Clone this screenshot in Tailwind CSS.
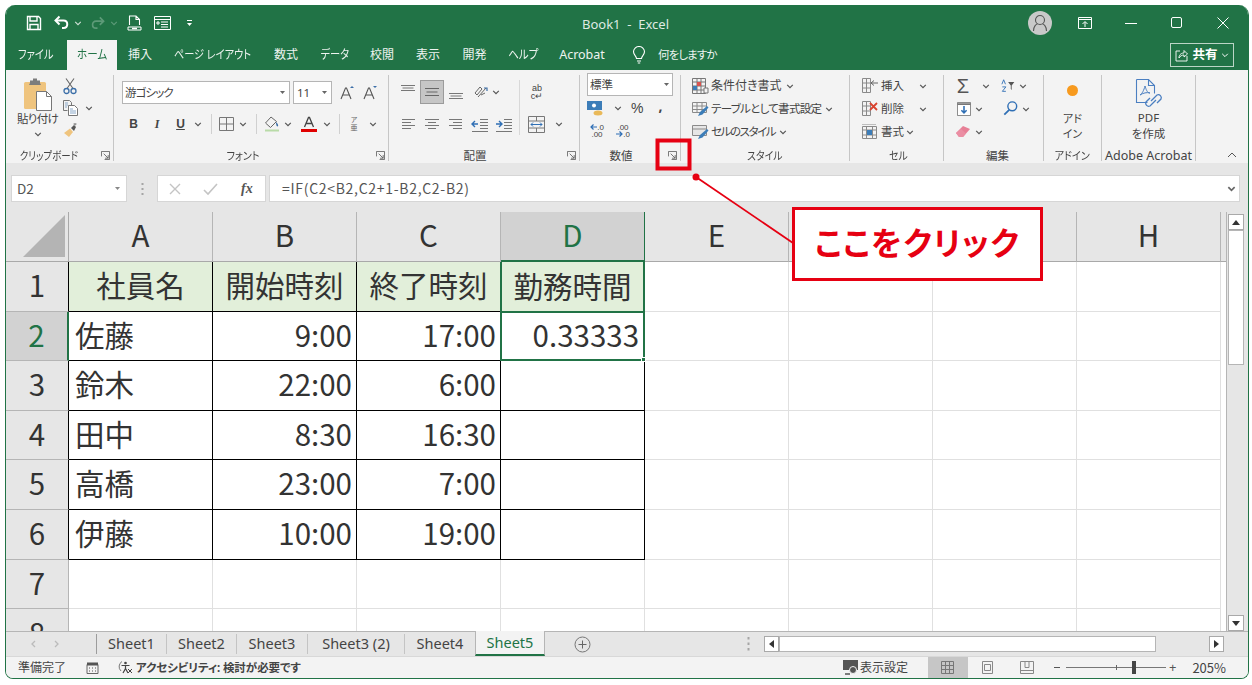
<!DOCTYPE html>
<html lang="ja">
<head>
<meta charset="utf-8">
<script src="https://cdn.jsdelivr.net/npm/@tailwindcss/browser@4"></script>
</head>
<body class="bg-white">
<svg class="hidden">
<symbol id="c" viewBox="0 0 8 8"><path d="M1.200 2.800 4 5.600 6.800 2.800" fill="none" stroke="#555" stroke-width="1.200"/></symbol>
<symbol id="l" viewBox="0 0 10 10"><path d="M.5 6V.5H9.500V9.500H4M3 3 8 8M8 4.500V8H4.500" fill="none" stroke="#666" stroke-width="1"/></symbol>
</svg>
<div class="relative w-[1252px] h-[685px] overflow-hidden p-[5px] font-['Noto_Sans','Noto_Sans_CJK_JP',sans-serif] [font-feature-settings:'palt'] text-[#444]">
  <div class="w-[1244px] h-[674px] border-x border-b border-[#217346] rounded-t-[10px] rounded-b-[8px] overflow-hidden flex flex-col bg-[#f3f3f3]">

    <!-- title bar -->
    <div class="h-[35px] -mx-px bg-[#217346] grid grid-cols-3 items-center text-white shrink-0">
      <div class="flex items-center pl-[21px] h-full pt-[1px]">
        <svg class="w-[16px] h-[16px]" viewBox="0 0 16 16"><path d="M1.500 1.500h11l2 2v11h-13zM4 1.500v4.500h7V1.500M4 14.500V9.500h8v5" fill="none" stroke="#fff" stroke-width="1.400"/></svg>
        <svg class="w-[16px] h-[16px] ml-[12px]" viewBox="0 0 16 16"><path d="M5.500 1.500 1.500 5.500 5.500 9.500" fill="none" stroke="#fff" stroke-width="2"/><path d="M2 5.500h7.500c5 0 5 7.500 0 7.500H8" fill="none" stroke="#fff" stroke-width="2"/></svg>
        <svg class="w-[8px] h-[8px] ml-[4px]" viewBox="0 0 8 8"><path d="M1.200 2.800 4 5.600 6.800 2.800" fill="none" stroke="#cfe0d6" stroke-width="1.100"/></svg>
        <svg class="w-[15px] h-[15px] ml-[8px]" viewBox="0 0 16 16"><path d="M10.500 1.500 14.500 5.500 10.500 9.500" fill="none" stroke="#5d9a78" stroke-width="1.800"/><path d="M14 5.500H6.500c-5 0-5 7.500 0 7.500H8" fill="none" stroke="#5d9a78" stroke-width="1.800"/></svg>
        <svg class="w-[8px] h-[8px] ml-[5px]" viewBox="0 0 8 8"><path d="M1.200 2.800 4 5.600 6.800 2.800" fill="none" stroke="#5d9a78" stroke-width="1.100"/></svg>
        <svg class="w-[15px] h-[16px] ml-[9px]" viewBox="0 0 15 16"><path d="M2.500 10V1h6.500l3.500 3.500V10M9 1v3.500h3.500" fill="none" stroke="#fff" stroke-width="1.100"/><path d="M1 12h13v3H1z" fill="none" stroke="#fff" stroke-width="1"/><path d="M5 13.500h5" stroke="#fff" stroke-width="1.500"/></svg>
        <svg class="w-[17px] h-[14px] ml-[12px]" viewBox="0 0 17 14"><path d="M.500.500h16v13H.500zM.500 3.500h16M7 6h7M7 8.500h7M7 11h7M3 6h2v2H3z" fill="none" stroke="#fff" stroke-width="1"/></svg>
        <svg class="w-[7px] h-[8px] ml-[15px]" viewBox="0 0 7 8"><path d="M1 1.500h5" stroke="#fff"/><path d="M1 4h5L3.500 7z" fill="#fff"/></svg>
      </div>
      <div class="text-center text-[13px] text-[#dfeae3] pt-[4px] pr-[3px]">Book1 &nbsp;-&nbsp; Excel</div>
      <div class="flex items-center justify-end h-full">
        <div class="w-[24px] h-[24px] rounded-full bg-[#c9c9c9] flex items-center justify-center mr-[26px]">
          <svg class="w-[16px] h-[18px]" viewBox="0 0 16 18"><circle cx="8" cy="6" r="4.500" fill="none" stroke="#555" stroke-width="1.100"/><path d="M1.500 17c0-5 3-7 4-7M14.500 17c0-5-3-7-4-7" fill="none" stroke="#555" stroke-width="1.100"/></svg>
        </div>
        <svg class="w-[14px] h-[12px] mr-[33px]" viewBox="0 0 14 12"><path d="M.500.500h13v11H.500zM.500 2.500h13" fill="none" stroke="#fff"/><path d="M7 10V5M4.500 7 7 4.500 9.500 7" fill="none" stroke="#fff"/></svg>
        <svg class="w-[12px] h-[12px] mr-[34px]" viewBox="0 0 12 12"><path d="M0 6.500h12" stroke="#fff"/></svg>
        <svg class="w-[11px] h-[11px] mr-[35px]" viewBox="0 0 11 11"><rect x=".5" y=".5" width="10" height="10" rx="1.500" fill="none" stroke="#fff"/></svg>
        <svg class="w-[12px] h-[12px] mr-[20px]" viewBox="0 0 12 12"><path d="M.500.500l11 11M11.500.500l-11 11" stroke="#fff"/></svg>
      </div>
    </div>

    <!-- ribbon tabs -->
    <div class="h-[30px] -mx-px bg-[#217346] flex items-stretch text-[12px] leading-none text-[#eef4f0] shrink-0">
      <div class="w-[62px] flex items-center justify-center"><span class="scale-x-[.85]">ファイル</span></div>
      <div class="w-[50px] flex items-center justify-center bg-[#f3f3f3] text-[#217346]"><span class="scale-x-[.88]">ホーム</span></div>
      <div class="w-[46px] flex items-center justify-center">挿入</div>
      <div class="w-[99px] flex items-center justify-center whitespace-nowrap"><span class="scale-x-[.85]">ページ レイアウト</span></div>
      <div class="w-[48px] flex items-center justify-center">数式</div>
      <div class="w-[49px] flex items-center justify-center"><span class="scale-x-[.85]">データ</span></div>
      <div class="w-[46px] flex items-center justify-center">校閲</div>
      <div class="w-[46px] flex items-center justify-center">表示</div>
      <div class="w-[47px] flex items-center justify-center">開発</div>
      <div class="w-[50px] flex items-center justify-center"><span class="scale-x-[.88]">ヘルプ</span></div>
      <div class="w-[68px] flex items-center justify-center text-[12.5px]">Acrobat</div>
      <div class="flex items-center ml-[16px]">
        <svg class="w-[14px] h-[18px]" viewBox="0 0 14 18"><path d="M4.500 12.500C4.500 10 1.500 9 1.500 5.800a5.500 5.300 0 0 1 11 0C12.500 9 9.500 10 9.500 12.500zM5 15h4M5.800 17h2.400" fill="none" stroke="#fff" stroke-width="1.100"/></svg>
        <span class="ml-[12px] text-[11.5px] tracking-[-.9px]">何をしますか</span>
      </div>
      <div class="flex-1 flex items-center justify-end pr-[15px]">
        <div class="w-[64px] h-[24px] border border-[#bcd5c6] flex items-center justify-center text-[12.5px] text-white font-bold">
          <svg class="w-[13px] h-[13px] mr-[4px]" viewBox="0 0 13 13"><path d="M5 2H1v10h11V7M4 9c0-4 3-5 5-5V1.500L12.500 5 9 8V6C7 6 5 7 4 9z" fill="none" stroke="#fff" stroke-width=".9"/></svg>共有<svg class="w-[8px] h-[8px] ml-[3px]" viewBox="0 0 8 8"><path d="M1.200 2.800 4 5.600 6.800 2.800" fill="none" stroke="#fff"/></svg>
        </div>
      </div>
    </div>

    <!-- ribbon -->
    <div class="h-[93px] pt-[5px] flex text-[11.5px] leading-none shrink-0">
      <!-- clipboard -->
      <div class="relative w-[108px] h-[86px] border-r border-[#c6c6c6] flex flex-col">
        <div class="flex h-[72px]">
          <div class="w-[55px] pl-[8px] flex flex-col items-center">
            <svg class="w-[30px] h-[33px] mt-[3px]" viewBox="0 0 30 33"><rect x="1" y="4" width="22" height="27" rx="1.500" fill="#efc47e"/><path d="M7 5V2.500h3V.5h4v2h3V5l1 2H6z" fill="#7c7c7c"/><path d="M13.500 13.500h10l5 5v14h-15z" fill="#fff" stroke="#777"/><path d="M23.500 13.500v5h5" fill="none" stroke="#777"/></svg>
            <span class="mt-[2px] text-[11.5px] tracking-[-.7px] whitespace-nowrap">貼り付け</span>
            <svg class="w-[8px] h-[8px] mt-[5px]"><use href="#c"/></svg>
          </div>
          <div class="flex flex-col">
            <div class="h-[22px] w-[18px] flex items-center justify-center"><svg class="w-[14px] h-[18px]" viewBox="0 0 14 18"><path d="M3 1.500l7 10M11 1.500l-7 10" stroke="#666" stroke-width="1.100" fill="none"/><circle cx="3.500" cy="14" r="2.500" fill="none" stroke="#3c6fa8" stroke-width="1.300"/><circle cx="10.500" cy="14" r="2.500" fill="none" stroke="#3c6fa8" stroke-width="1.300"/></svg></div>
            <div class="h-[22px] flex items-center"><div class="w-[18px] flex justify-center"><svg class="w-[15px] h-[16px]" viewBox="0 0 15 16"><path d="M.500.500h6l2 2v3M.500.500v10h4" fill="none" stroke="#777"/><path d="M5.500 5.500h6l3 3v7h-9z" fill="#fff" stroke="#777"/><path d="M7 9h3M7 11h6M7 13h6M2 3h3M2 5h3M2 7h2" stroke="#8aa8c8"/></svg></div><svg class="w-[8px] h-[8px] ml-[6px]"><use href="#c"/></svg></div>
            <div class="h-[22px] w-[18px] flex items-center justify-center"><svg class="w-[15px] h-[15px]" viewBox="0 0 15 15"><path d="M1 10 7 5.500l3 3.500-4 5z" fill="#efc47e"/><path d="M8 5l3-3 2 2-2 4z" fill="#555"/><path d="M12 .5v2M10.500 1h3" stroke="#777"/></svg></div>
          </div>
        </div>
        <div class="mt-auto text-center pr-[25px] pl-[4px] h-[11px] whitespace-nowrap text-[11px]"><span class="inline-block scale-x-[.86]">クリップボード</span></div>
        <svg class="absolute right-[3px] bottom-[1px] w-[9px] h-[9px]"><use href="#l"/></svg>
      </div>
      <!-- font -->
      <div class="relative w-[275px] h-[86px] border-r border-[#c6c6c6] flex flex-col pl-[8px]">
        <div class="flex items-center h-[23px] mt-[6px]">
          <div class="w-[168px] h-[23px] bg-white border border-[#b5b5b5] flex items-center justify-between px-[2px]"><span class="tracking-[-.9px] mt-[1px]">游ゴシック</span><svg class="w-[7px] h-[7px] mr-[1px]" viewBox="0 0 7 7"><path d="M1 2h5L3.500 5z" fill="#666"/></svg></div>
          <div class="w-[39px] h-[23px] ml-[3px] bg-white border border-[#b5b5b5] flex items-center justify-between px-[3px] text-[11.5px]"><span>11</span><svg class="w-[7px] h-[7px]" viewBox="0 0 7 7"><path d="M1 2h5L3.500 5z" fill="#666"/></svg></div>
          <div class="w-[20px] ml-[5px] flex justify-center"><svg class="w-[16px] h-[16px]" viewBox="0 0 16 16"><path d="M2 14 6.500 3h1L12 14M4 10h6" fill="none" stroke="#555" stroke-width="1.100"/><path d="M11 3l2-2 2 2z" fill="#3c6fa8"/></svg></div>
          <div class="w-[20px] ml-[3px] flex justify-center"><svg class="w-[16px] h-[16px]" viewBox="0 0 16 16"><path d="M2 14 6.500 3h1L12 14M4 10h6" fill="none" stroke="#555" stroke-width="1.100"/><path d="M11 1l2 2 2-2z" fill="#3c6fa8"/></svg></div>
        </div>
        <div class="flex items-center h-[22px] mt-[9px]">
          <div class="w-[23px] text-center font-bold text-[12px] font-['Liberation_Sans']">B</div>
          <div class="w-[24px] text-center font-bold italic text-[12px] font-['Liberation_Serif']">I</div>
          <div class="w-[23px] text-center font-bold underline text-[12px] font-['Liberation_Sans']">U</div>
          <div class="w-[12px] flex justify-center"><svg class="w-[8px] h-[8px]"><use href="#c"/></svg></div>
          <div class="w-[14px] flex justify-center"><div class="w-px h-[20px] bg-[#d0d0d0]"></div></div>
          <svg class="w-[15px] h-[14px] ml-[1px]" viewBox="0 0 15 14"><path d="M.500.500h14v13H.500zM7.500.500v13M.500 7h14" fill="none" stroke="#777"/></svg>
          <div class="w-[12px] ml-[3px] flex justify-center"><svg class="w-[8px] h-[8px]"><use href="#c"/></svg></div>
          <div class="w-[14px] flex justify-center"><div class="w-px h-[20px] bg-[#d0d0d0]"></div></div>
          <div class="w-[18px] flex justify-center"><svg class="w-[17px] h-[17px]" viewBox="0 0 17 17"><path d="M7 1 1.500 7l5 4.500 6-6z" fill="none" stroke="#666"/><path d="M12 6c2 2 2.500 3 2 4s-2 .5-2-4z" fill="#3c6fa8"/><path d="M1 14.500h14" stroke="#b9dba8" stroke-width="2"/></svg></div>
          <div class="w-[12px] ml-[1px] flex justify-center"><svg class="w-[8px] h-[8px]"><use href="#c"/></svg></div>
          <div class="w-[20px] ml-[5px] flex justify-center"><svg class="w-[16px] h-[16px]" viewBox="0 0 16 16"><path d="M3.500 11 7.500 1.500h1L12.500 11M5 7.500h6" fill="none" stroke="#444" stroke-width="1.300"/><path d="M0 14.500h16" stroke="#e00000" stroke-width="3"/></svg></div>
          <div class="w-[12px] ml-[2px] flex justify-center"><svg class="w-[8px] h-[8px]"><use href="#c"/></svg></div>
          <div class="w-[12px] flex justify-center"><div class="w-px h-[20px] bg-[#d0d0d0]"></div></div>
          <div class="w-[18px] text-center text-[7px] leading-[8.5px] text-[#666]">ア<br>亜</div>
          <div class="w-[12px] ml-[4px] flex justify-center"><svg class="w-[8px] h-[8px]"><use href="#c"/></svg></div>
        </div>
        <div class="mt-auto text-center pr-[24px] h-[11px] text-[11px]"><span class="inline-block scale-x-[.92]">フォント</span></div>
        <svg class="absolute right-[3px] bottom-[1px] w-[9px] h-[9px]"><use href="#l"/></svg>
      </div>
      <!-- alignment -->
      <div class="relative w-[191px] h-[86px] border-r border-[#c6c6c6] flex flex-col">
        <div class="flex h-[55px] mt-[5px]">
          <div class="w-[131px] pl-[7px] border-r border-[#d8d8d8] flex flex-col">
            <div class="flex items-center h-[24px]">
              <svg class="w-[24px] h-[18px]" viewBox="0 0 24 18"><path d="M5 2.500h14M6.500 5h11M5 7.500h14" fill="none" stroke="#777"/></svg>
              <div class="w-[24px] h-[24px] bg-[#c6c6c6] border border-[#9b9b9b] flex items-center justify-center"><svg class="w-[16px] h-[10px]" viewBox="0 0 16 10"><path d="M1 1.500h14M2.500 5h11M1 8.500h14" fill="none" stroke="#666"/></svg></div>
              <svg class="w-[24px] h-[18px]" viewBox="0 0 24 18"><path d="M5 10.500h14M6.500 13h11M5 15.500h14" fill="none" stroke="#777"/></svg>
              <svg class="w-[18px] h-[18px] ml-[4px]" viewBox="0 0 18 18"><path d="M3 10l5-6 2 2-5 6zM9 12l4-2M6 14l8-9" fill="none" stroke="#666"/><path d="M12 5h3v3" fill="none" stroke="#3c6fa8" stroke-width="1.200"/></svg>
              <svg class="w-[8px] h-[8px] ml-[2px]"><use href="#c"/></svg>
            </div>
            <div class="flex items-center h-[22px] mt-[9px]">
              <svg class="w-[24px] h-[14px]" viewBox="0 0 24 14"><path d="M6 2.500h13M6 5.500h9M6 8.500h13M6 11.500h9" fill="none" stroke="#777"/></svg>
              <svg class="w-[24px] h-[14px]" viewBox="0 0 24 14"><path d="M5 2.500h14M8 5.500h8M5 8.500h14M8 11.500h8" fill="none" stroke="#777"/></svg>
              <svg class="w-[24px] h-[14px]" viewBox="0 0 24 14"><path d="M5 2.500h13M9 5.500h9M5 8.500h13M9 11.500h9" fill="none" stroke="#777"/></svg>
              <svg class="w-[24px] h-[15px]" viewBox="0 0 24 15"><path d="M12 2.500h8M12 5.500h8M12 8.500h8M12 11.500h8M4 14.500h16" fill="none" stroke="#777"/><path d="M10 7H4M7 4 4 7l3 3" fill="none" stroke="#2f6fb5" stroke-width="1.400"/></svg>
              <svg class="w-[24px] h-[15px]" viewBox="0 0 24 15"><path d="M12 2.500h8M12 5.500h8M12 8.500h8M12 11.500h8M4 14.500h16" fill="none" stroke="#777"/><path d="M4 7h6M7 4l3 3-3 3" fill="none" stroke="#2f6fb5" stroke-width="1.400"/></svg>
            </div>
          </div>
          <div class="flex flex-col pl-[8px]">
            <div class="h-[24px] flex items-center justify-center w-[18px] text-[9px] leading-[8px] font-['Liberation_Sans'] text-center text-[#444]">ab<br>c↵</div>
            <div class="flex items-center h-[22px] mt-[9px]">
              <svg class="w-[17px] h-[17px]" viewBox="0 0 17 17"><path d="M.500.500h16v16H.500zM.500 5h16M.500 12h16M8.500 1v4M8.500 12v4" fill="none" stroke="#777"/><path d="M3 8.500h11M5 6.500l-2 2 2 2M12 6.500l2 2-2 2" fill="none" stroke="#2f6fb5"/></svg>
              <svg class="w-[8px] h-[8px] ml-[10px]"><use href="#c"/></svg>
            </div>
          </div>
        </div>
        <div class="mt-auto text-center pr-[18px] h-[11px] text-[11.5px]">配置</div>
        <svg class="absolute right-[3px] bottom-[1px] w-[9px] h-[9px]"><use href="#l"/></svg>
      </div>
      <!-- number -->
      <div class="relative w-[101px] h-[86px] border-r border-[#c6c6c6] flex flex-col pl-[7px]">
        <div class="w-[86px] h-[23px] -mt-[2px] bg-white border border-[#b5b5b5] flex items-center justify-between px-[2px]"><span>標準</span><svg class="w-[7px] h-[7px]" viewBox="0 0 7 7"><path d="M1 2h5L3.500 5z" fill="#666"/></svg></div>
        <div class="flex items-center h-[22px] mt-[1px]">
          <svg class="w-[17px] h-[16px]" viewBox="0 0 17 16"><rect x="0" y="1" width="15" height="9" fill="#3c7db8"/><circle cx="7" cy="5.500" r="2" fill="#fff"/><ellipse cx="11" cy="13" rx="4.500" ry="2.500" fill="#e9b959"/></svg>
          <svg class="w-[8px] h-[8px] ml-[10px]"><use href="#c"/></svg>
          <span class="ml-[9px] text-[14px] leading-none font-['Liberation_Sans']">%</span>
          <span class="ml-[15px] font-bold text-[14px] leading-none -mt-[5px]">,</span>
        </div>
        <div class="flex items-center h-[22px] mt-[1px] text-[8px] leading-[7px] font-['Liberation_Sans'] text-center">
          <div class="w-[20px]"><svg class="inline-block w-[7px] h-[6px] align-baseline" viewBox="0 0 7 6"><path d="M7 3H1M3.500 .5 1 3l2.500 2.500" fill="none" stroke="#2f6fb5" stroke-width="1.200"/></svg>.0<br>.00</div>
          <div class="w-[20px] ml-[6px]">.00<br><svg class="inline-block w-[7px] h-[6px] align-baseline" viewBox="0 0 7 6"><path d="M0 3h6M3.500 .5 6 3 3.500 5.500" fill="none" stroke="#2f6fb5" stroke-width="1.200"/></svg>.0</div>
        </div>
        <div class="mt-auto text-center pr-[25px] h-[11px] text-[11.5px]">数値</div>
        <svg class="absolute right-[3px] bottom-[1px] w-[9px] h-[9px]"><use href="#l"/></svg>
      </div>
      <!-- styles -->
      <div class="w-[169px] h-[86px] border-r border-[#c6c6c6] flex flex-col pl-[11px] whitespace-nowrap text-[11.5px]">
        <div class="flex items-center h-[23px] -mt-[1px]">
          <svg class="w-[17px] h-[16px] mr-[2px]" viewBox="0 0 17 16"><path d="M.500.500h13v15H.500zM.500 4h13M.500 8h13M.500 12h13M5 .5v15M9 .5v15" fill="none" stroke="#777"/><path d="M5 4h4v4H5z" fill="#d9534f"/><path d="M1 8h4v4H1z" fill="#3c7db8"/><path d="M12 10h4v5h-4z" fill="#f3f3f3" stroke="#777"/></svg><span class="text-[12px]">条件付き書式</span><svg class="w-[8px] h-[8px] ml-[4px]"><use href="#c"/></svg>
        </div>
        <div class="flex items-center h-[23px]">
          <svg class="w-[17px] h-[16px] mr-[2px]" viewBox="0 0 17 16"><path d="M.500 1.500h14v10H.500zM.500 5h14M.500 8.500h14M5 1.500v10M10 1.500v10" fill="none" stroke="#8a8a8a"/><path d="M6 15l2-4 7-6 1.500 1.500-6 7z" fill="#3c7db8"/></svg><span class="tracking-[-.7px]">テーブルとして書式設定</span><svg class="w-[8px] h-[8px] ml-[4px]"><use href="#c"/></svg>
        </div>
        <div class="flex items-center h-[23px]">
          <svg class="w-[17px] h-[16px] mr-[2px]" viewBox="0 0 17 16"><path d="M.500 1.500h14v10H.500zM.500 5h14" fill="#e6e6e6" stroke="#8a8a8a"/><path d="M6 15l2-4 7-6 1.500 1.500-6 7z" fill="#3c7db8"/></svg><span class="tracking-[-1.400px]">セルのスタイル</span><svg class="w-[8px] h-[8px] ml-[4px]"><use href="#c"/></svg>
        </div>
        <div class="mt-auto text-center pr-[11px] h-[11px] text-[11px]"><span class="inline-block scale-x-[.9]">スタイル</span></div>
      </div>
      <!-- cells -->
      <div class="w-[94px] h-[86px] border-r border-[#c6c6c6] flex flex-col pl-[11px] whitespace-nowrap">
        <div class="flex items-center h-[23px] -mt-[1px]"><svg class="w-[18px] h-[15px] mr-[2px]" viewBox="0 0 18 15"><path d="M1.500.5h8v14h-8zM1.500 5h8M1.500 10h8M5.500.5v14" fill="none" stroke="#8a8a8a"/><path d="M17 5H10M13 2.500 10 5l3 2.500" fill="none" stroke="#666"/></svg>挿入<svg class="w-[8px] h-[8px] ml-[15px]"><use href="#c"/></svg></div>
        <div class="flex items-center h-[23px]"><svg class="w-[18px] h-[15px] mr-[2px]" viewBox="0 0 18 15"><path d="M1.500.5h8v14h-8zM1.500 5h8M1.500 10h8M5.500.5v14" fill="none" stroke="#8a8a8a"/><path d="M9 2l7 7M16 2 9 9" stroke="#d9432f" stroke-width="1.800"/></svg>削除<svg class="w-[8px] h-[8px] ml-[15px]"><use href="#c"/></svg></div>
        <div class="flex items-center h-[23px]"><svg class="w-[18px] h-[16px] mr-[2px]" viewBox="0 0 18 16"><path d="M1.500 2.500h14v12h-14zM1.500 6h14M1.500 11h14M5.500 2.500v12M11.500 2.500v12" fill="none" stroke="#8a8a8a"/><path d="M6 6h5v5H6z" fill="#3c7db8"/><path d="M1.500.5h14" stroke="#888" stroke-dasharray="1 1"/></svg>書式<svg class="w-[8px] h-[8px] ml-[2px]"><use href="#c"/></svg></div>
        <div class="mt-auto text-center pr-[7px] h-[11px] text-[11px]"><span class="inline-block scale-x-[.9]">セル</span></div>
      </div>
      <!-- edit -->
      <div class="w-[100px] h-[86px] border-r border-[#c6c6c6] flex flex-col pl-[10px]">
        <div class="flex items-center h-[23px] -mt-[1px]">
          <span class="w-[18px] text-center text-[20px] leading-none text-[#555] font-['Liberation_Sans']">Σ</span>
          <svg class="w-[8px] h-[8px] ml-[10px]"><use href="#c"/></svg>
          <svg class="w-[16px] h-[14px] ml-[11px]" viewBox="0 0 18 15"><path d="M1 5.500 3 .5l2 5M1.500 8.500h4l-4 5h4" fill="none" stroke="#2f6fb5"/><path d="M8 3h7l-3 4v5l-1-1V7z" fill="#555"/></svg>
          <svg class="w-[8px] h-[8px] ml-[2px]"><use href="#c"/></svg>
        </div>
        <div class="flex items-center h-[23px]">
          <svg class="w-[14px] h-[14px] ml-[3px]" viewBox="0 0 16 16"><path d="M.500.500h15v15H.500z" fill="#fff" stroke="#777"/><path d="M.500 2.500h15" stroke="#777" stroke-width="2"/><path d="M8 4.500v8M5 9.500l3 3 3-3" fill="none" stroke="#2f6fb5" stroke-width="1.800"/></svg>
          <svg class="w-[8px] h-[8px] ml-[4px]"><use href="#c"/></svg>
          <svg class="w-[15px] h-[15px] ml-[20px]" viewBox="0 0 17 17"><circle cx="10.500" cy="6" r="5" fill="none" stroke="#2f6fb5" stroke-width="1.600"/><path d="M7 10 1.500 15.500" stroke="#2f6fb5" stroke-width="2"/></svg>
          <svg class="w-[8px] h-[8px] ml-[4px]"><use href="#c"/></svg>
        </div>
        <div class="flex items-center h-[23px]">
          <svg class="w-[16px] h-[14px] ml-[1px]" viewBox="0 0 16 14"><path d="M1 8 8 1l7 3-7 8H4z" fill="#e77f96"/><path d="M1 8l3 4h4l3-3.500L6 4z" fill="#eb8ea3"/></svg>
          <svg class="w-[8px] h-[8px] ml-[4px]"><use href="#c"/></svg>
        </div>
        <div class="mt-auto text-center pr-[2px] h-[11px] text-[11.5px]">編集</div>
      </div>
      <!-- add-in -->
      <div class="w-[58px] h-[86px] border-r border-[#c6c6c6] flex flex-col items-center">
        <div class="w-[11px] h-[11px] rounded-full bg-[#f79a1e] mt-[10px] blur-[.4px]"></div>
        <div class="mt-[15px] text-[11px] leading-[15px] text-center">アド<br>イン</div>
        <div class="mt-auto h-[11px] text-[11px]"><span class="inline-block scale-x-[.92]">アドイン</span></div>
      </div>
      <!-- acrobat -->
      <div class="w-[94px] h-[86px] border-r border-[#c6c6c6] flex flex-col items-center">
        <svg class="w-[28px] h-[31px] mt-[3px]" viewBox="0 0 28 31"><path d="M1.500 1.500h12l6 6v8M1.500 1.500v23h11M13.500 1.500v6h6" fill="none" stroke="#4b7fc1" stroke-width="1.100"/><path d="M10 8c-1 4-3 8-5 9 3-2 7-3 10-2-3 0-4-4-5-7z" fill="none" stroke="#4b7fc1"/><path d="M16 23l6-6a3 3 0 0 1 4 4l-4 4M21 22l-6 6a3 3 0 0 1-4-4l4-4" fill="none" stroke="#4b7fc1" stroke-width="1.300"/></svg>
        <div class="mt-[1px] text-[11.5px] leading-[16px] text-center">PDF<br>を作成</div>
        <div class="mt-auto h-[11px] text-[12.5px] whitespace-nowrap">Adobe Acrobat</div>
      </div>
      <div class="flex-1 flex justify-end items-end pr-[11px] h-[86px]">
        <svg class="w-[10px] h-[8px] mb-[2px]" viewBox="0 0 10 8"><path d="M1 6l4-4 4 4" fill="none" stroke="#555"/></svg>
      </div>
    </div>

    <!-- formula bar -->
    <div class="h-[49px] bg-[#e6e6e6] pt-[12px] pl-[5px] flex text-[#555] shrink-0">
      <div class="w-[116px] h-[27px] bg-white border border-[#d6d6d6] flex items-center justify-between pl-[5px] pr-[5px] text-[13.5px] font-['Noto_Sans_CJK_JP']"><span>D2</span><svg class="w-[7px] h-[7px]" viewBox="0 0 7 7"><path d="M1 2h5L3.500 5z" fill="#888"/></svg></div>
      <div class="w-[30px] h-[27px] flex items-center justify-center"><svg class="w-[3px] h-[12px]" viewBox="0 0 3 12"><path d="M1.500 0v2M1.500 5v2M1.500 10v2" stroke="#a5a5a5" stroke-width="2"/></svg></div>
      <div class="w-[109px] h-[27px] bg-white border border-[#d6d6d6] flex items-center pl-[10px]">
        <svg class="w-[14px] h-[14px]" viewBox="0 0 14 14"><path d="M2 2l10 10M12 2 2 12" stroke="#c4c4c4" stroke-width="1.400"/></svg>
        <svg class="w-[15px] h-[14px] ml-[21px]" viewBox="0 0 15 14"><path d="M1 8l4 4 9-10" fill="none" stroke="#c4c4c4" stroke-width="1.600"/></svg>
        <span class="ml-[23px] font-['Liberation_Serif'] italic font-bold text-[14px] text-[#555]">fx</span>
      </div>
      <div class="w-[971px] h-[27px] ml-[3px] bg-white border border-[#d6d6d6] flex items-center justify-between pl-[12px] pr-[3px] text-[14px] font-['Noto_Sans_CJK_JP']"><span class="tracking-[.7px]">=IF(C2&lt;B2,C2+1-B2,C2-B2)</span><svg class="w-[9px] h-[9px]" viewBox="0 0 8 8"><path d="M1.200 2.800 4 5.600 6.800 2.800" fill="none" stroke="#666" stroke-width="1.500"/></svg></div>
    </div>

    <!-- sheet + scrollbar -->
    <div class="h-[419px] flex shrink-0 overflow-hidden">
      <div class="w-[1220px] h-[419px] overflow-hidden bg-white grid grid-cols-[63px_repeat(8,144px)_5px] grid-rows-[50px_repeat(8,49.6px)] text-[29.500px] leading-none text-[#333] font-['Noto_Sans_CJK_JP'] [font-feature-settings:normal] [&>div]:pb-[3px]">
        <div class="bg-[#e6e6e6] border-r border-b border-[#a9a9a9] flex items-end justify-end pr-[2px]"><svg class="w-[44px] h-[44px]" viewBox="0 0 44 44"><path d="M43 1V43H1z" fill="#b4b4b4"/></svg></div>
        <div class="bg-[#e6e6e6] border-r border-b border-[#b5b5b5] border-b-[#a9a9a9] flex items-center justify-center">A</div>
        <div class="bg-[#e6e6e6] border-r border-b border-[#b5b5b5] border-b-[#a9a9a9] flex items-center justify-center">B</div>
        <div class="bg-[#e6e6e6] border-r border-b border-[#b5b5b5] border-b-[#a9a9a9] flex items-center justify-center">C</div>
        <div class="bg-[#d2d2d2] border-r border-b-2 border-[#217346] flex items-center justify-center text-[#217346]">D</div>
        <div class="bg-[#e6e6e6] border-r border-b border-[#b5b5b5] border-b-[#a9a9a9] flex items-center justify-center">E</div>
        <div class="bg-[#e6e6e6] border-r border-b border-[#b5b5b5] border-b-[#a9a9a9]"></div>
        <div class="bg-[#e6e6e6] border-r border-b border-[#b5b5b5] border-b-[#a9a9a9]"></div>
        <div class="bg-[#e6e6e6] border-r border-b border-[#b5b5b5] border-b-[#a9a9a9] flex items-center justify-center">H</div>
        <div class="bg-[#e6e6e6] border-b border-[#a9a9a9]"></div>

        <div class="bg-[#e6e6e6] border-r border-b border-[#b5b5b5] border-r-black flex items-center justify-center">1</div>
        <div class="bg-[#e2efda] border-r border-b border-black flex items-center justify-center">社員名</div>
        <div class="bg-[#e2efda] border-r border-b border-black flex items-center justify-center">開始時刻</div>
        <div class="bg-[#e2efda] border-r border-b border-black flex items-center justify-center">終了時刻</div>
        <div class="bg-[#e2efda] border-x-2 border-r-[#217346] border-l-[#217346] flex items-center justify-center -ml-px">勤務時間</div>
        <i class="border-r border-b border-[#e0e0e0]"></i><i class="border-r border-b border-[#e0e0e0]"></i><i class="border-r border-b border-[#e0e0e0]"></i><i class="border-r border-b border-[#e0e0e0]"></i><i></i>

        <div class="bg-[#d2d2d2] border-r-2 border-b border-r-[#217346] border-b-[#b5b5b5] flex items-center justify-center text-[#217346]">2</div>
        <div class="border-r border-b border-black flex items-center pl-[6px]">佐藤</div>
        <div class="border-r border-b border-black flex items-center justify-end pr-[4px]">9:00</div>
        <div class="border-r border-b border-black flex items-center justify-end pr-[4px]">17:00</div>
        <div class="relative border-2 border-[#217346] -ml-px -mt-px flex items-center justify-end pr-[4px]">0.33333<span class="absolute -right-[3px] -bottom-[3px] w-[5px] h-[5px] bg-[#217346] border border-white"></span></div>
        <i class="border-r border-b border-[#e0e0e0]"></i><i class="border-r border-b border-[#e0e0e0]"></i><i class="border-r border-b border-[#e0e0e0]"></i><i class="border-r border-b border-[#e0e0e0]"></i><i></i>

        <div class="bg-[#e6e6e6] border-r border-b border-[#b5b5b5] border-r-black flex items-center justify-center">3</div>
        <div class="border-r border-b border-black flex items-center pl-[6px]">鈴木</div>
        <div class="border-r border-b border-black flex items-center justify-end pr-[4px]">22:00</div>
        <div class="border-r border-b border-black flex items-center justify-end pr-[4px]">6:00</div>
        <div class="border-r border-b border-black"></div>
        <i class="border-r border-b border-[#e0e0e0]"></i><i class="border-r border-b border-[#e0e0e0]"></i><i class="border-r border-b border-[#e0e0e0]"></i><i class="border-r border-b border-[#e0e0e0]"></i><i></i>

        <div class="bg-[#e6e6e6] border-r border-b border-[#b5b5b5] border-r-black flex items-center justify-center">4</div>
        <div class="border-r border-b border-black flex items-center pl-[6px]">田中</div>
        <div class="border-r border-b border-black flex items-center justify-end pr-[4px]">8:30</div>
        <div class="border-r border-b border-black flex items-center justify-end pr-[4px]">16:30</div>
        <div class="border-r border-b border-black"></div>
        <i class="border-r border-b border-[#e0e0e0]"></i><i class="border-r border-b border-[#e0e0e0]"></i><i class="border-r border-b border-[#e0e0e0]"></i><i class="border-r border-b border-[#e0e0e0]"></i><i></i>

        <div class="bg-[#e6e6e6] border-r border-b border-[#b5b5b5] border-r-black flex items-center justify-center">5</div>
        <div class="border-r border-b border-black flex items-center pl-[6px]">高橋</div>
        <div class="border-r border-b border-black flex items-center justify-end pr-[4px]">23:00</div>
        <div class="border-r border-b border-black flex items-center justify-end pr-[4px]">7:00</div>
        <div class="border-r border-b border-black"></div>
        <i class="border-r border-b border-[#e0e0e0]"></i><i class="border-r border-b border-[#e0e0e0]"></i><i class="border-r border-b border-[#e0e0e0]"></i><i class="border-r border-b border-[#e0e0e0]"></i><i></i>

        <div class="bg-[#e6e6e6] border-r border-b border-[#b5b5b5] border-r-black flex items-center justify-center">6</div>
        <div class="border-r border-b border-black flex items-center pl-[6px]">伊藤</div>
        <div class="border-r border-b border-black flex items-center justify-end pr-[4px]">10:00</div>
        <div class="border-r border-b border-black flex items-center justify-end pr-[4px]">19:00</div>
        <div class="border-r border-b border-black"></div>
        <i class="border-r border-b border-[#e0e0e0]"></i><i class="border-r border-b border-[#e0e0e0]"></i><i class="border-r border-b border-[#e0e0e0]"></i><i class="border-r border-b border-[#e0e0e0]"></i><i></i>

        <div class="bg-[#e6e6e6] border-r border-b border-[#b5b5b5] flex items-center justify-center">7</div>
        <i class="border-r border-b border-[#e0e0e0]"></i><i class="border-r border-b border-[#e0e0e0]"></i><i class="border-r border-b border-[#e0e0e0]"></i><i class="border-r border-b border-[#e0e0e0]"></i><i class="border-r border-b border-[#e0e0e0]"></i><i class="border-r border-b border-[#e0e0e0]"></i><i class="border-r border-b border-[#e0e0e0]"></i><i class="border-r border-b border-[#e0e0e0]"></i><i></i>

        <div class="bg-[#e6e6e6] border-r border-[#b5b5b5] flex items-start justify-center pt-[9px]">8</div>
        <i class="border-r border-[#e0e0e0]"></i><i class="border-r border-[#e0e0e0]"></i><i class="border-r border-[#e0e0e0]"></i><i class="border-r border-[#e0e0e0]"></i><i class="border-r border-[#e0e0e0]"></i><i class="border-r border-[#e0e0e0]"></i><i class="border-r border-[#e0e0e0]"></i><i class="border-r border-[#e0e0e0]"></i><i></i>
      </div>
      <div class="flex-1 bg-[#e6e6e6] border-l border-[#b5b5b5] pl-[1px] pt-[2px] flex flex-col">
        <div class="w-[16px] h-[16px] bg-white border border-[#a9a9a9] flex items-center justify-center"><svg class="w-[8px] h-[5px]" viewBox="0 0 8 5"><path d="M0 5 4 0l4 5z" fill="#333"/></svg></div>
        <div class="w-[16px] h-[135px] bg-white border border-[#b5b5b5]"></div>
        <div class="flex-1"></div>
        <div class="w-[16px] h-[16px] bg-white border border-[#a9a9a9] flex items-center justify-center"><svg class="w-[8px] h-[5px]" viewBox="0 0 8 5"><path d="M0 0 4 5l4-5z" fill="#333"/></svg></div>
      </div>
    </div>

    <!-- sheet tabs -->
    <div class="h-[25px] bg-[#e6e6e6] border-t border-[#b5b5b5] flex items-stretch text-[14.500px] text-[#444] shrink-0 font-['Noto_Sans',sans-serif]">
      <div class="w-[90px] flex items-center pl-[24px]">
        <svg class="w-[6px] h-[8px]" viewBox="0 0 6 8"><path d="M5 1 2 4l3 3" fill="none" stroke="#bbb" stroke-width="1.300"/></svg>
        <svg class="w-[6px] h-[8px] ml-[18px]" viewBox="0 0 6 8"><path d="M1 1l3 3-3 3" fill="none" stroke="#bbb" stroke-width="1.300"/></svg>
      </div>
      <div class="w-[70px] my-[2px] border-l border-[#9c9c9c] flex items-center justify-center">Sheet1</div>
      <div class="w-[70px] my-[2px] border-l border-[#c4c4c4] flex items-center justify-center">Sheet2</div>
      <div class="w-[71px] my-[2px] border-l border-[#c4c4c4] flex items-center justify-center">Sheet3</div>
      <div class="w-[97px] my-[2px] border-l border-[#c4c4c4] flex items-center justify-center">Sheet3 (2)</div>
      <div class="w-[71px] my-[2px] border-l border-[#c4c4c4] flex items-center justify-center">Sheet4</div>
      <div class="w-[70px] -mt-px bg-[#f3f3f3] border-x border-[#b5b5b5] border-b-2 border-b-[#217346] flex items-center justify-center text-[#217346]">Sheet5</div>
      <div class="ml-[29px] flex items-center"><svg class="w-[17px] h-[17px]" viewBox="0 0 17 17"><circle cx="8.500" cy="8.500" r="7.500" fill="none" stroke="#777"/><path d="M8.500 4.500v8M4.500 8.500h8" stroke="#666"/></svg></div>
      <div class="ml-[156px] flex items-center"><svg class="w-[3px] h-[14px]" viewBox="0 0 3 14"><path d="M1.500 0v2.500M1.500 5.500v2.500M1.500 11v2.500" stroke="#a5a5a5" stroke-width="2"/></svg></div>
      <div class="ml-[14px] flex items-center">
        <div class="w-[15px] h-[16px] bg-white border border-[#a9a9a9] flex items-center justify-center"><svg class="w-[5px] h-[8px]" viewBox="0 0 5 8"><path d="M5 0 0 4l5 4z" fill="#333"/></svg></div>
        <div class="w-[377px] h-[16px] bg-white border border-[#b5b5b5]"></div>
        <div class="w-[53px]"></div>
        <div class="w-[15px] h-[16px] bg-white border border-[#a9a9a9] flex items-center justify-center"><svg class="w-[5px] h-[8px]" viewBox="0 0 5 8"><path d="M0 0l5 4-5 4z" fill="#333"/></svg></div>
      </div>
    </div>

    <!-- status bar -->
    <div class="h-[22px] bg-[#f3f3f3] border-t border-[#d8d8d8] flex items-center text-[12px] text-[#444] shrink-0">
      <span class="ml-[12px]">準備完了</span>
      <svg class="w-[13px] h-[13px] ml-[20px]" viewBox="0 0 13 13"><path d="M1 3.500h11v9H1z" fill="none" stroke="#666"/><path d="M1 1.500h11v3H1z" fill="#555"/><path d="M3 7h1M6 7h1M9 7h1M3 10h1M6 10h1M9 10h1" stroke="#555"/></svg>
      <svg class="w-[16px] h-[15px] ml-[18px]" viewBox="0 0 16 15"><path d="M5 1.500A6 6 0 0 0 4 11" fill="none" stroke="#777"/><circle cx="8.500" cy="3" r="1.300" fill="#444"/><path d="M4.500 5.500h8M8.500 5.500v3L6 13M8.500 8.500 11 13" fill="none" stroke="#444" stroke-width="1.200"/><path d="M11 9l4 4M15 9l-4 4" stroke="#444"/></svg>
      <span class="ml-[3px] font-bold text-[11.5px] tracking-[-.1px]">アクセシビリティ: 検討が必要です</span>
      <div class="ml-auto flex items-center h-full">
        <svg class="w-[16px] h-[15px]" viewBox="0 0 16 15"><path d="M0 0h15v10H0z" fill="#555"/><circle cx="10" cy="10" r="3.500" fill="#555" stroke="#f3f3f3"/><path d="M2 14h5" stroke="#555" stroke-width="1.500"/></svg>
        <span class="ml-px w-[48px] whitespace-nowrap text-[12px]">表示設定</span>
        <div class="ml-[20px] w-[40px] h-full bg-[#c6c6c6] flex items-center justify-center"><svg class="w-[13px] h-[13px]" viewBox="0 0 13 13"><path d="M.500.500h12v12H.500zM4.500.5v12M8.500.5v12M.5 4.500h12M.5 8.500h12" fill="none" stroke="#777"/></svg></div>
        <div class="w-[40px] flex justify-center"><svg class="w-[13px] h-[13px]" viewBox="0 0 13 13"><path d="M1.500.500h10v12h-10zM3.500 3.500h6v6h-6z" fill="none" stroke="#888"/></svg></div>
        <div class="w-[38px] flex justify-center"><svg class="w-[14px] h-[13px]" viewBox="0 0 14 13"><path d="M.500.500h13v12H.500zM.5 9.500h13M5 .5v6h4v-6" fill="none" stroke="#888"/></svg></div>
        <span class="ml-[8px] w-[6px] h-px bg-[#555]"></span>
        <div class="relative w-[100px] ml-[6px] h-px bg-[#777]"><span class="absolute left-[50px] -top-[2px] w-px h-[5px] bg-[#666]"></span><span class="absolute left-[66px] -top-[6px] w-[4px] h-[13px] bg-[#444]"></span></div>
        <span class="ml-[3px] text-[13px] text-[#555]">+</span>
        <span class="ml-[16px] mr-[22px] text-[13px] font-['Noto_Sans_CJK_JP']">205%</span>
      </div>
    </div>
  </div>

  <!-- annotation overlay -->
  <svg class="absolute left-0 top-0 w-[1252px] h-[685px] pointer-events-none" viewBox="0 0 1252 685">
    <circle cx="696" cy="177" r="3.500" fill="#e60012"/>
    <path d="M696 177 793 243" stroke="#e60012" stroke-width="1.800"/>
    <rect x="657.500" y="140.500" width="32" height="28" fill="none" stroke="#e60012" stroke-width="4"/>
  </svg>
  <div class="absolute left-[792px] top-[207px] w-[251px] h-[74px] pb-[6px] bg-white border-[3px] border-[#e60012] flex items-center justify-center text-[#e60012] text-[32px] font-bold font-['Noto_Sans_CJK_JP'] [font-feature-settings:'palt'] tracking-[1.300px]">ここをクリック</div>
</div>
</body>
</html>
